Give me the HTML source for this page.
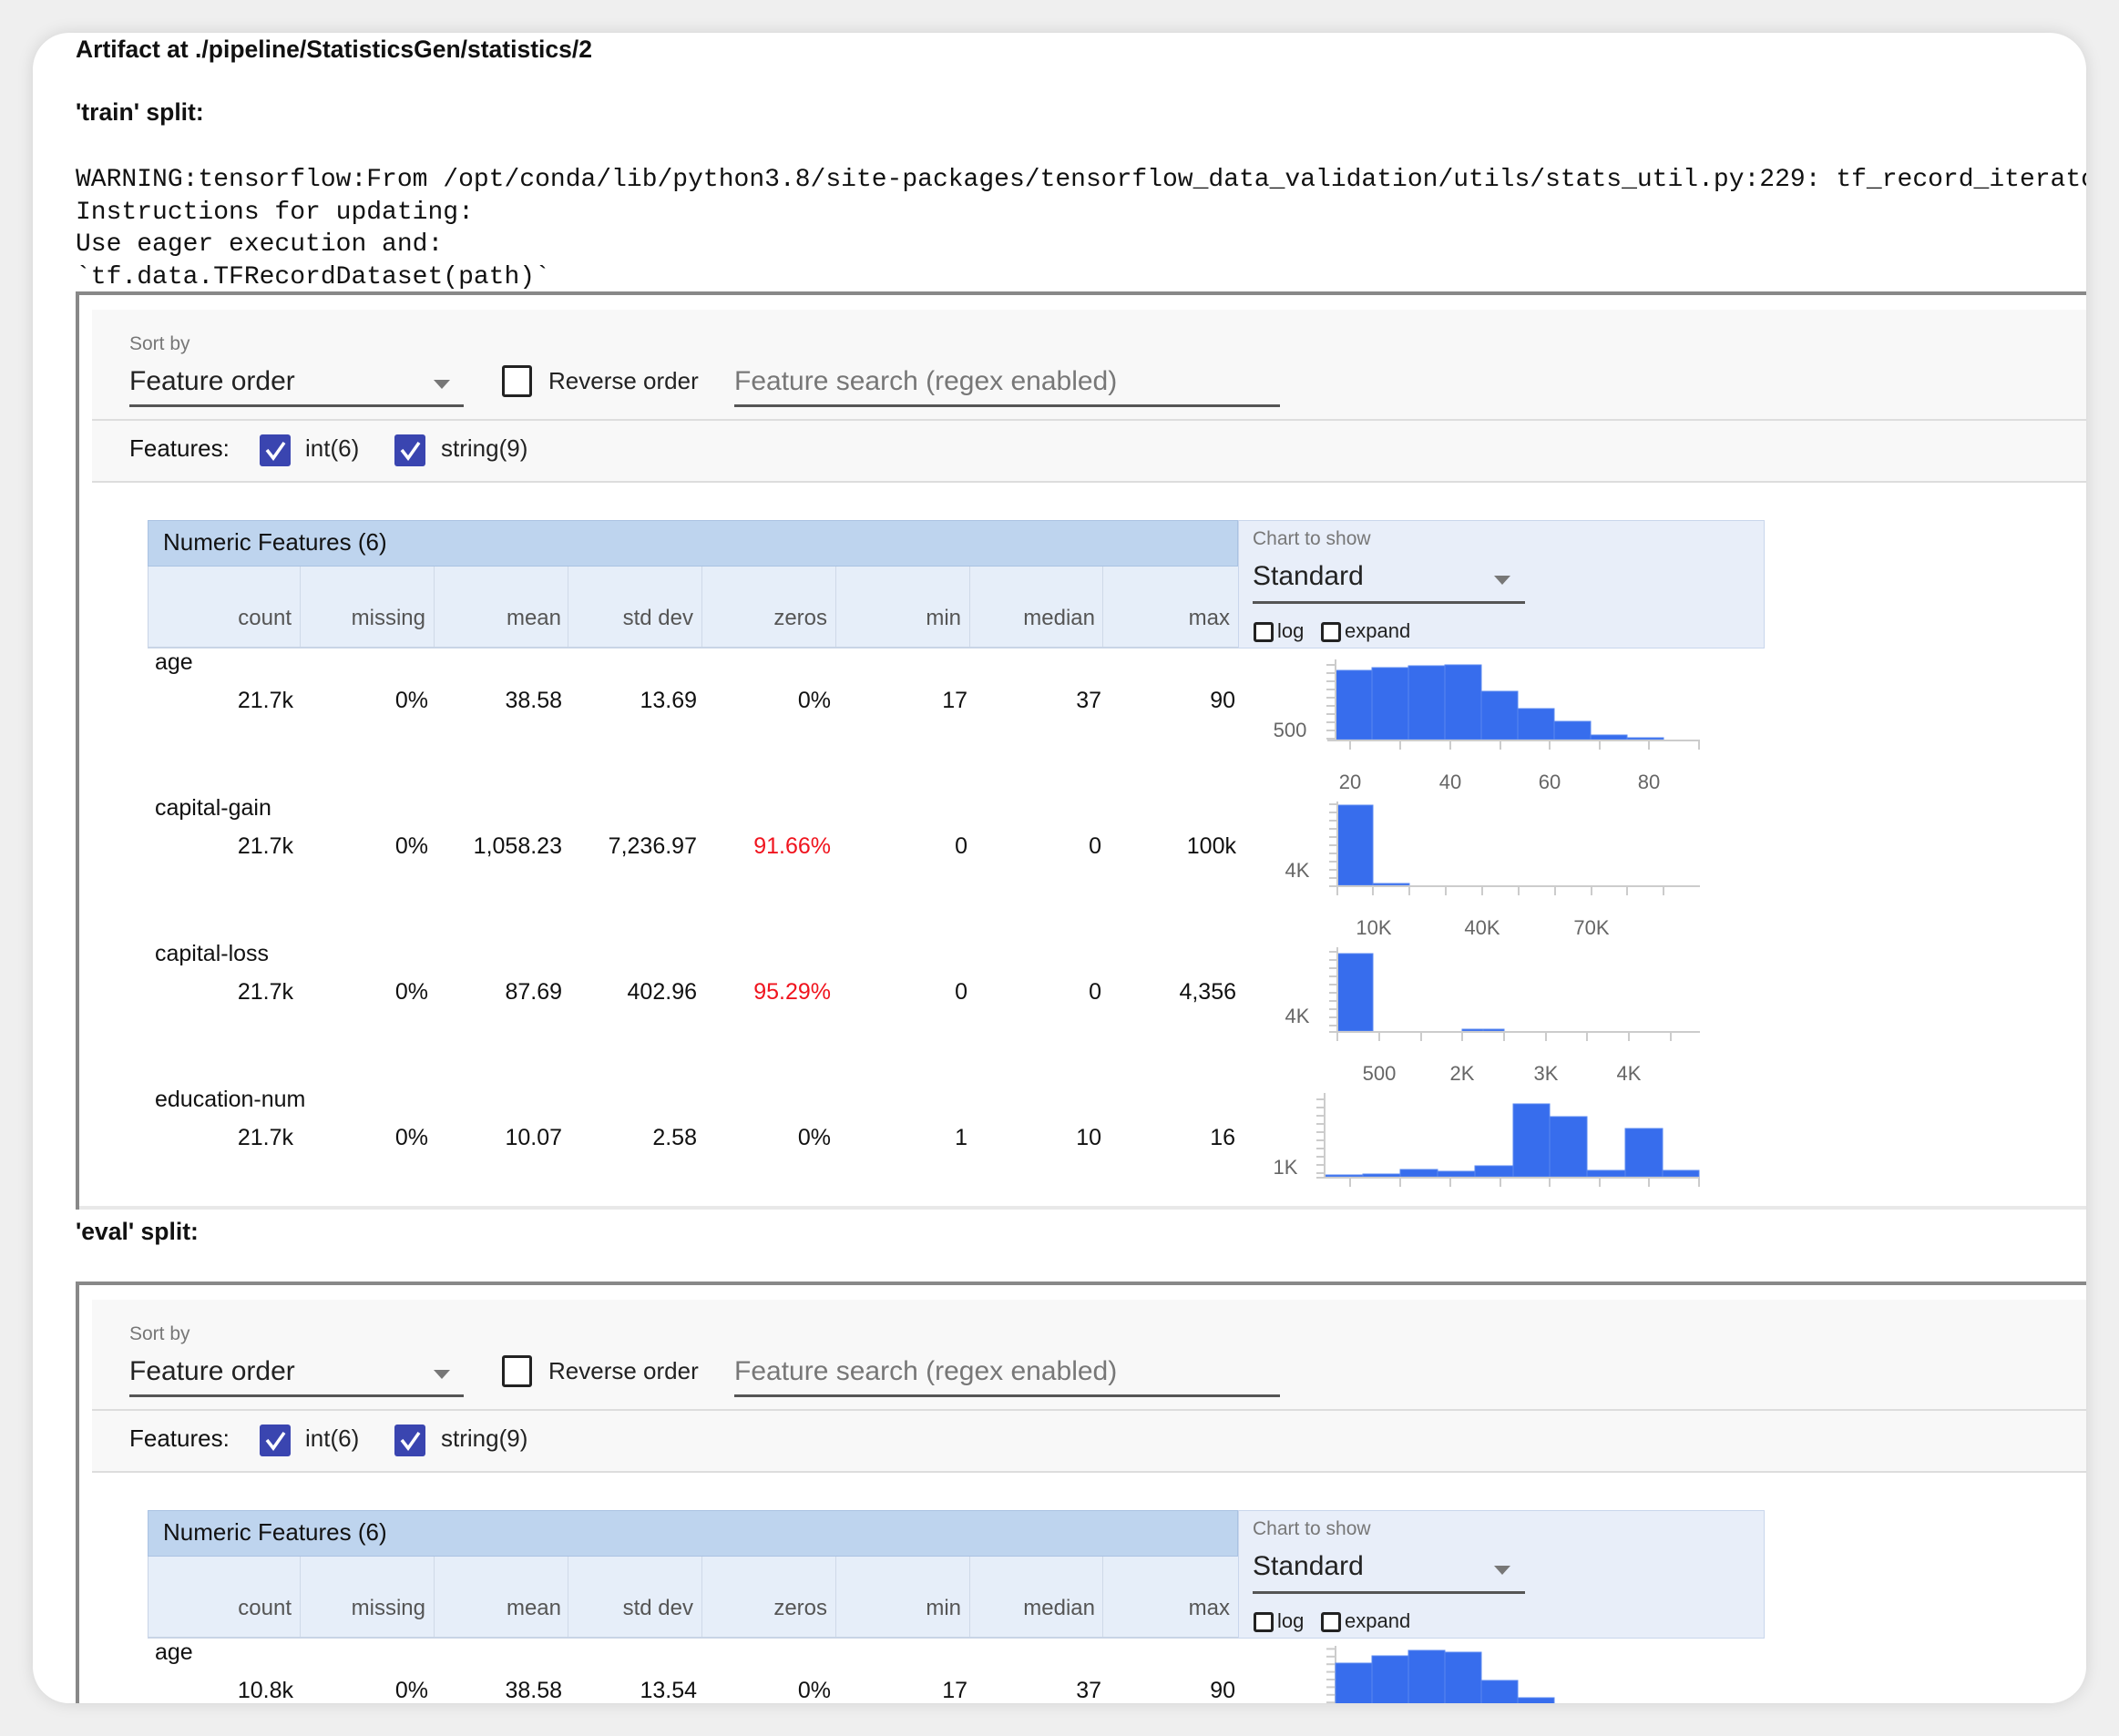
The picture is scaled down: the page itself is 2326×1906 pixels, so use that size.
<!DOCTYPE html>
<html><head><meta charset="utf-8">
<style>
*{margin:0;padding:0;box-sizing:border-box}
html,body{width:2326px;height:1906px;overflow:hidden;background:#efefef;font-family:"Liberation Sans","Noto Sans CJK KR",sans-serif;color:#111}
#card{position:absolute;left:36px;top:36px;width:2254px;height:1834px;background:#fff;border-radius:40px;overflow:hidden;box-shadow:0 0 18px rgba(0,0,0,0.12)}
#in{position:absolute;left:-36px;top:-36px;width:2326px;height:1906px;overflow:hidden}
.a{position:absolute;white-space:nowrap;line-height:1}
.b{font-weight:bold;font-size:26.5px}
.mono{font-family:"Liberation Mono",monospace;font-size:28px;line-height:35.6px;position:absolute;left:83px;top:180px;white-space:pre;color:#111}
.split{position:absolute;left:0;width:2326px;height:800px;overflow:visible}
.frame{position:absolute;left:83px;top:320px;width:2300px;height:1008px;border-top:4px solid #888;border-left:4px solid #888}
.fbot{position:absolute;left:87px;top:1324px;width:2300px;height:4px;background:#e8e8e8}
.panel{position:absolute;left:101px;top:340px;width:2300px;height:190px;background:#f8f8f8;border-bottom:2px solid #ddd}
.sep{position:absolute;left:101px;top:460px;width:2300px;height:2px;background:#ddd}
.ul{position:absolute;height:3px;background:#555}
.tri{position:absolute;width:0;height:0;border-left:9px solid transparent;border-right:9px solid transparent;border-top:10px solid #777}
.cb{position:absolute;border:3px solid #222;border-radius:3px;background:#fff}
.cbf{position:absolute;width:34px;height:35px;background:#3a45b0;border-radius:3px}
.thead{position:absolute;left:162px;top:571px;width:1197px;height:51px;background:#bed4ee;border:1px solid #aac2e2}
.hrow{position:absolute;left:162px;top:622px;width:1197px;height:90px;background:#e6eef9;border-bottom:2px solid #c8d4e6;border-left:1px solid #c8d4e6}
.vd{position:absolute;top:622px;width:1px;height:88px;background:#cfd9e8}
.cpan{position:absolute;left:1359px;top:571px;width:578px;height:141px;background:#e8eef9;border:1px solid #c9d6ec}
.h{font-size:24px;color:#555;text-align:right}
.v{font-size:25px;color:#111;text-align:right}
.n{font-size:25px;color:#111}
.red{color:#f0141e}
svg text{font-family:"Liberation Sans",sans-serif;font-size:22px;fill:#666}
</style></head><body>
<div id="card"><div id="in">
<div class="a b" style="left:83px;top:41px">Artifact at ./pipeline/StatisticsGen/statistics/2</div>
<div class="a b" style="left:83px;top:110px">'train' split:</div>
<div class="mono">WARNING:tensorflow:From /opt/conda/lib/python3.8/site-packages/tensorflow_data_validation/utils/stats_util.py:229: tf_record_iterator
Instructions for updating:
Use eager execution and:
`tf.data.TFRecordDataset(path)`</div>

<!-- TRAIN SPLIT -->
<div class="split" style="top:0">
<div class="frame"></div><div class="fbot"></div>
<div class="panel"></div><div class="sep"></div>
<div class="a" style="left:142px;top:367px;font-size:21px;color:#777">Sort by</div>
<div class="a" style="left:142px;top:404px;font-size:30px;color:#222">Feature order</div>
<div class="tri" style="left:476px;top:417px"></div>
<div class="ul" style="left:142px;top:444px;width:367px"></div>
<div class="cb" style="left:551px;top:401px;width:33px;height:35px"></div>
<div class="a" style="left:602px;top:405px;font-size:26px;color:#222">Reverse order</div>
<div class="a" style="left:806px;top:404px;font-size:30px;color:#777">Feature search (regex enabled)</div>
<div class="ul" style="left:806px;top:444px;width:599px"></div>
<div class="a" style="left:142px;top:479px;font-size:26px;color:#111">Features:</div>
<div class="cbf" style="left:285px;top:477px"></div>
<svg class="a" style="left:285px;top:477px" width="34" height="35"><path d="M8 17 L15 26 L27 9" stroke="#fff" stroke-width="3.5" fill="none"/></svg>
<div class="a" style="left:335px;top:479px;font-size:26px;color:#222">int(6)</div>
<div class="cbf" style="left:433px;top:477px"></div>
<svg class="a" style="left:433px;top:477px" width="34" height="35"><path d="M8 17 L15 26 L27 9" stroke="#fff" stroke-width="3.5" fill="none"/></svg>
<div class="a" style="left:484px;top:479px;font-size:26px;color:#222">string(9)</div>

<div class="thead"></div>
<div class="a" style="left:179px;top:582px;font-size:26px;color:#111">Numeric Features (6)</div>
<div class="hrow"></div>
<div class="vd" style="left:329px"></div><div class="vd" style="left:476px"></div><div class="vd" style="left:623px"></div><div class="vd" style="left:770px"></div><div class="vd" style="left:917px"></div><div class="vd" style="left:1064px"></div><div class="vd" style="left:1210px"></div>
<div class="a h" style="left:162px;width:158px;top:667px">count</div>
<div class="a h" style="left:329px;width:138px;top:667px">missing</div>
<div class="a h" style="left:476px;width:140px;top:667px">mean</div>
<div class="a h" style="left:623px;width:138px;top:667px">std dev</div>
<div class="a h" style="left:770px;width:138px;top:667px">zeros</div>
<div class="a h" style="left:917px;width:138px;top:667px">min</div>
<div class="a h" style="left:1064px;width:138px;top:667px">median</div>
<div class="a h" style="left:1210px;width:140px;top:667px">max</div>
<div class="cpan"></div>
<div class="a" style="left:1375px;top:581px;font-size:21px;color:#777">Chart to show</div>
<div class="a" style="left:1375px;top:618px;font-size:30px;color:#222">Standard</div>
<div class="tri" style="left:1640px;top:632px"></div>
<div class="ul" style="left:1375px;top:660px;width:299px"></div>
<div class="cb" style="left:1376px;top:683px;width:22px;height:22px"></div>
<div class="a" style="left:1402px;top:682px;font-size:22px;color:#222">log</div>
<div class="cb" style="left:1450px;top:683px;width:22px;height:22px"></div>
<div class="a" style="left:1476px;top:682px;font-size:22px;color:#222">expand</div>

<div class="a n" style="left:170px;top:715px">age</div>
<div class="a v" style="left:162px;width:160px;top:757px">21.7k</div>
<div class="a v" style="left:329px;width:141px;top:757px">0%</div>
<div class="a v" style="left:476px;width:141px;top:757px">38.58</div>
<div class="a v" style="left:623px;width:142px;top:757px">13.69</div>
<div class="a v" style="left:770px;width:142px;top:757px">0%</div>
<div class="a v" style="left:917px;width:145px;top:757px">17</div>
<div class="a v" style="left:1064px;width:145px;top:757px">37</div>
<div class="a v" style="left:1210px;width:146px;top:757px">90</div>

<div class="a n" style="left:170px;top:875px">capital-gain</div>
<div class="a v" style="left:162px;width:160px;top:917px">21.7k</div>
<div class="a v" style="left:329px;width:141px;top:917px">0%</div>
<div class="a v" style="left:476px;width:141px;top:917px">1,058.23</div>
<div class="a v" style="left:623px;width:142px;top:917px">7,236.97</div>
<div class="a v red" style="left:770px;width:142px;top:917px">91.66%</div>
<div class="a v" style="left:917px;width:145px;top:917px">0</div>
<div class="a v" style="left:1064px;width:145px;top:917px">0</div>
<div class="a v" style="left:1210px;width:147px;top:917px">100k</div>

<div class="a n" style="left:170px;top:1035px">capital-loss</div>
<div class="a v" style="left:162px;width:160px;top:1077px">21.7k</div>
<div class="a v" style="left:329px;width:141px;top:1077px">0%</div>
<div class="a v" style="left:476px;width:141px;top:1077px">87.69</div>
<div class="a v" style="left:623px;width:142px;top:1077px">402.96</div>
<div class="a v red" style="left:770px;width:142px;top:1077px">95.29%</div>
<div class="a v" style="left:917px;width:145px;top:1077px">0</div>
<div class="a v" style="left:1064px;width:145px;top:1077px">0</div>
<div class="a v" style="left:1210px;width:147px;top:1077px">4,356</div>

<div class="a n" style="left:170px;top:1195px">education-num</div>
<div class="a v" style="left:162px;width:160px;top:1237px">21.7k</div>
<div class="a v" style="left:329px;width:141px;top:1237px">0%</div>
<div class="a v" style="left:476px;width:141px;top:1237px">10.07</div>
<div class="a v" style="left:623px;width:142px;top:1237px">2.58</div>
<div class="a v" style="left:770px;width:142px;top:1237px">0%</div>
<div class="a v" style="left:917px;width:145px;top:1237px">1</div>
<div class="a v" style="left:1064px;width:145px;top:1237px">10</div>
<div class="a v" style="left:1210px;width:146px;top:1237px">16</div>

<svg class="a" style="left:0;top:0" width="2326" height="1330">
<defs>
<pattern id="yt" x="0" y="0" width="10" height="9" patternUnits="userSpaceOnUse"><rect x="0" y="0" width="10" height="2" fill="#ccc"/></pattern>
</defs>
<g fill="#376ded" stroke="#5a88f0" stroke-width="1">
<rect x="1466" y="736" width="40" height="76"/><rect x="1506" y="733" width="40" height="79"/><rect x="1546" y="731" width="40" height="81"/><rect x="1586" y="730" width="40" height="82"/><rect x="1626" y="759" width="40" height="53"/><rect x="1666" y="778" width="40" height="34"/><rect x="1706" y="792" width="40" height="20"/><rect x="1746" y="807" width="40" height="5"/><rect x="1786" y="810" width="40" height="2"/>
<rect x="1468" y="884" width="39" height="88"/><rect x="1507" y="970" width="40" height="2"/>
<rect x="1468" y="1047" width="39" height="85"/><rect x="1605" y="1130" width="23" height="2"/><rect x="1628" y="1130" width="23" height="2"/>
<rect x="1454" y="1290" width="42" height="2"/><rect x="1496" y="1289" width="41" height="3"/><rect x="1537" y="1284" width="41" height="8"/><rect x="1578" y="1286" width="41" height="6"/><rect x="1619" y="1280" width="42" height="12"/><rect x="1661" y="1212" width="40" height="80"/><rect x="1701" y="1226" width="41" height="66"/><rect x="1742" y="1285" width="42" height="7"/><rect x="1784" y="1239" width="41" height="53"/><rect x="1825" y="1285" width="40" height="7"/>
</g>
<g stroke="#ccc" stroke-width="2" fill="none">
<path d="M1466 724V813M1457 813H1866M1482 813v10M1537 813v10M1592 813v10M1647 813v10M1701 813v10M1756 813v10M1810 813v10M1865 813v10"/>
<path d="M1468 880V973M1459 973H1866M1468 973v10M1507 973v10M1547 973v10M1587 973v10M1627 973v10M1667 973v10M1707 973v10M1747 973v10M1786 973v10M1826 973v10"/>
<path d="M1468 1040V1133M1459 1133H1866M1468 1133v10M1514 1133v10M1560 1133v10M1605 1133v10M1651 1133v10M1697 1133v10M1742 1133v10M1788 1133v10M1834 1133v10"/>
<path d="M1454 1200V1293M1445 1293H1866M1482 1293v10M1537 1293v10M1592 1293v10M1647 1293v10M1701 1293v10M1756 1293v10M1810 1293v10M1865 1293v10"/>
</g>
<rect x="1456" y="728" width="10" height="84" fill="url(#yt)"/>
<rect x="1459" y="882" width="9" height="90" fill="url(#yt)"/>
<rect x="1459" y="1042" width="9" height="90" fill="url(#yt)"/>
<rect x="1445" y="1202" width="9" height="90" fill="url(#yt)"/>
<text x="1416" y="809" text-anchor="middle">500</text>
<text x="1482" y="866" text-anchor="middle">20</text><text x="1592" y="866" text-anchor="middle">40</text><text x="1701" y="866" text-anchor="middle">60</text><text x="1810" y="866" text-anchor="middle">80</text>
<text x="1424" y="963" text-anchor="middle">4K</text>
<text x="1508" y="1026" text-anchor="middle">10K</text><text x="1627" y="1026" text-anchor="middle">40K</text><text x="1747" y="1026" text-anchor="middle">70K</text>
<text x="1424" y="1123" text-anchor="middle">4K</text>
<text x="1514" y="1186" text-anchor="middle">500</text><text x="1605" y="1186" text-anchor="middle">2K</text><text x="1697" y="1186" text-anchor="middle">3K</text><text x="1788" y="1186" text-anchor="middle">4K</text>
<text x="1411" y="1289" text-anchor="middle">1K</text>
</svg>
</div>

<div class="a b" style="left:83px;top:1339px">'eval' split:</div>

<!-- EVAL SPLIT -->
<div class="split" style="top:1087px">
<div class="frame" style="height:700px"></div>
<div class="panel"></div><div class="sep"></div>
<div class="a" style="left:142px;top:367px;font-size:21px;color:#777">Sort by</div>
<div class="a" style="left:142px;top:404px;font-size:30px;color:#222">Feature order</div>
<div class="tri" style="left:476px;top:417px"></div>
<div class="ul" style="left:142px;top:444px;width:367px"></div>
<div class="cb" style="left:551px;top:401px;width:33px;height:35px"></div>
<div class="a" style="left:602px;top:405px;font-size:26px;color:#222">Reverse order</div>
<div class="a" style="left:806px;top:404px;font-size:30px;color:#777">Feature search (regex enabled)</div>
<div class="ul" style="left:806px;top:444px;width:599px"></div>
<div class="a" style="left:142px;top:479px;font-size:26px;color:#111">Features:</div>
<div class="cbf" style="left:285px;top:477px"></div>
<svg class="a" style="left:285px;top:477px" width="34" height="35"><path d="M8 17 L15 26 L27 9" stroke="#fff" stroke-width="3.5" fill="none"/></svg>
<div class="a" style="left:335px;top:479px;font-size:26px;color:#222">int(6)</div>
<div class="cbf" style="left:433px;top:477px"></div>
<svg class="a" style="left:433px;top:477px" width="34" height="35"><path d="M8 17 L15 26 L27 9" stroke="#fff" stroke-width="3.5" fill="none"/></svg>
<div class="a" style="left:484px;top:479px;font-size:26px;color:#222">string(9)</div>

<div class="thead"></div>
<div class="a" style="left:179px;top:582px;font-size:26px;color:#111">Numeric Features (6)</div>
<div class="hrow"></div>
<div class="vd" style="left:329px"></div><div class="vd" style="left:476px"></div><div class="vd" style="left:623px"></div><div class="vd" style="left:770px"></div><div class="vd" style="left:917px"></div><div class="vd" style="left:1064px"></div><div class="vd" style="left:1210px"></div>
<div class="a h" style="left:162px;width:158px;top:667px">count</div>
<div class="a h" style="left:329px;width:138px;top:667px">missing</div>
<div class="a h" style="left:476px;width:140px;top:667px">mean</div>
<div class="a h" style="left:623px;width:138px;top:667px">std dev</div>
<div class="a h" style="left:770px;width:138px;top:667px">zeros</div>
<div class="a h" style="left:917px;width:138px;top:667px">min</div>
<div class="a h" style="left:1064px;width:138px;top:667px">median</div>
<div class="a h" style="left:1210px;width:140px;top:667px">max</div>
<div class="cpan"></div>
<div class="a" style="left:1375px;top:581px;font-size:21px;color:#777">Chart to show</div>
<div class="a" style="left:1375px;top:618px;font-size:30px;color:#222">Standard</div>
<div class="tri" style="left:1640px;top:632px"></div>
<div class="ul" style="left:1375px;top:660px;width:299px"></div>
<div class="cb" style="left:1376px;top:683px;width:22px;height:22px"></div>
<div class="a" style="left:1402px;top:682px;font-size:22px;color:#222">log</div>
<div class="cb" style="left:1450px;top:683px;width:22px;height:22px"></div>
<div class="a" style="left:1476px;top:682px;font-size:22px;color:#222">expand</div>

<div class="a n" style="left:170px;top:715px">age</div>
<div class="a v" style="left:162px;width:160px;top:757px">10.8k</div>
<div class="a v" style="left:329px;width:141px;top:757px">0%</div>
<div class="a v" style="left:476px;width:141px;top:757px">38.58</div>
<div class="a v" style="left:623px;width:142px;top:757px">13.54</div>
<div class="a v" style="left:770px;width:142px;top:757px">0%</div>
<div class="a v" style="left:917px;width:145px;top:757px">17</div>
<div class="a v" style="left:1064px;width:145px;top:757px">37</div>
<div class="a v" style="left:1210px;width:146px;top:757px">90</div>

<svg class="a" style="left:0;top:0" width="2326" height="800">
<defs><pattern id="yt2" x="0" y="0" width="10" height="8.4" patternUnits="userSpaceOnUse"><rect x="0" y="0" width="10" height="2" fill="#ccc"/></pattern></defs>
<path d="M1466 720V800" stroke="#ccc" stroke-width="2"/>
<rect x="1456" y="722" width="10" height="80" fill="url(#yt2)"/>
<g fill="#376ded" stroke="#5a88f0" stroke-width="1">
<rect x="1466" y="739" width="40" height="80"/><rect x="1506" y="731" width="40" height="88"/><rect x="1546" y="725" width="40" height="94"/><rect x="1586" y="727" width="40" height="92"/><rect x="1626" y="758" width="40" height="61"/><rect x="1666" y="777" width="40" height="42"/>
</g>
</svg>
</div>

</div></div>
</body></html>
